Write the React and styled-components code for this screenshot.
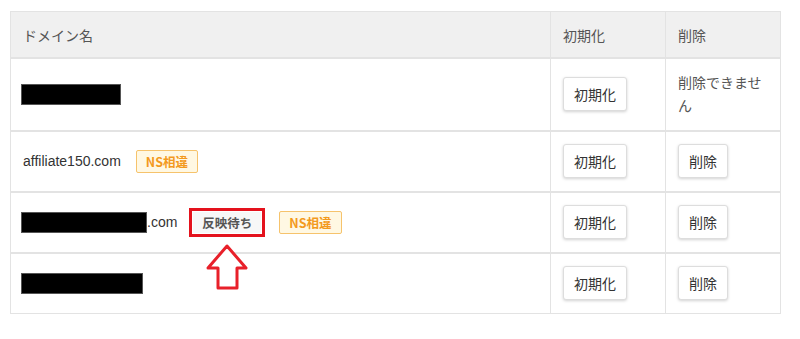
import styled, { createGlobalStyle, css } from 'styled-components';

const GlobalStyle = createGlobalStyle`
  body {
    margin: 0;
    background: #fff;
    font-family: "Noto Sans CJK JP", "Liberation Sans", sans-serif;
    color: #333;
  }
`;

const Page = styled.div`
  padding: 11px 0 0 10px;
`;

const Table = styled.table`
  width: 771px;
  border-collapse: collapse;
  table-layout: fixed;
  border: 1px solid #e3e3e3;
  font-size: 14px;
`;

const Head = styled.th`
  background: #f0f0f0;
  color: #555;
  font-weight: 400;
  text-align: left;
  padding: 12px 12px 11px;
  line-height: 22px;
  border: 1px solid #e3e3e3;
  border-bottom-width: 2px;
  width: ${({ $w }) => $w || 'auto'};
`;

const Cell = styled.td`
  padding: 12px 12px 13px;
  line-height: 23px;
  border: 1px solid #e3e3e3;
  border-top-width: 2px;
  vertical-align: middle;
  color: #555;
`;

const DomainLine = styled.div`
  display: flex;
  align-items: center;
  font-family: "Liberation Sans", Arial, sans-serif;
  color: #333;
`;

const Redacted = styled.span`
  display: inline-block;
  margin-left: -2px;
  width: ${({ $w }) => $w}px;
  height: 21px;
  background: #000;
  border: 1px solid #555;
  box-sizing: border-box;
`;

const BadgeWrap = styled.span`
  position: relative;
  margin-left: ${({ $gap }) => $gap || 16}px;
  display: inline-flex;
`;

const Badge = styled.span`
  display: inline-flex;
  align-items: center;
  height: 21px;
  padding: 0 9px;
  border-radius: 2px;
  font-family: "Noto Sans CJK JP", sans-serif;
  font-size: 12.5px;
  font-weight: 700;
  ${({ $tone }) =>
    $tone === 'warn'
      ? css`
          color: #f39a1e;
          background: #fff8e3;
          border: 1px solid #f6c36c;
        `
      : css`
          color: #555;
          background: #f7f7f7;
          border: 1px solid #ddd;
        `}
  ${({ $marked }) =>
    $marked &&
    css`
      border-radius: 0;
      outline: 3px solid #e4121d;
      outline-offset: 0;
      border-color: #fff;
    `}
`;

const Arrow = styled.svg`
  position: absolute;
  top: calc(100% + 10px);
  left: 50%;
  transform: translateX(-50%);
  overflow: visible;
`;

const Button = styled.button`
  height: 34px;
  padding: 0 10px;
  background: #fff;
  border: 1px solid #ddd;
  border-radius: 3px;
  box-shadow: 0 1px 3px rgba(0, 0, 0, 0.18);
  font-family: "Noto Sans CJK JP", sans-serif;
  font-size: 14px;
  color: #333;
  cursor: pointer;
`;

const UpArrow = () => (
  <Arrow width="42" height="46" viewBox="0 0 42 46">
    <polygon
      points="21,2 40,24 31,24 31,44 12,44 12,24 2,24"
      fill="#fff"
      stroke="#e8202a"
      strokeWidth="3"
      strokeLinejoin="round"
    />
  </Arrow>
);

const rows = [
  { id: 1, redact: 100, deletable: false },
  { id: 2, name: 'affiliate150.com', badges: [{ label: 'NS相違', tone: 'warn' }], deletable: true },
  {
    id: 3,
    redact: 126,
    suffix: '.com',
    badges: [
      { label: '反映待ち', tone: 'plain', marked: true },
      { label: 'NS相違', tone: 'warn' },
    ],
    deletable: true,
  },
  { id: 4, redact: 122, deletable: true },
];

export default function App() {
  return (
    <Page>
      <GlobalStyle />
      <Table>
        <thead>
          <tr>
            <Head>ドメイン名</Head>
            <Head $w="90px">初期化</Head>
            <Head $w="90px">削除</Head>
          </tr>
        </thead>
        <tbody>
          {rows.map((row) => (
            <tr key={row.id}>
              <Cell>
                <DomainLine>
                  {row.redact && <Redacted $w={row.redact} />}
                  {row.suffix}
                  {row.name}
                  {(row.badges || []).map((b, i) => (
                    <BadgeWrap key={b.label} $gap={i === 0 ? 15 : 17}>
                      <Badge $tone={b.tone} $marked={b.marked}>{b.label}</Badge>
                      {b.marked && <UpArrow />}
                    </BadgeWrap>
                  ))}
                </DomainLine>
              </Cell>
              <Cell>
                <Button>初期化</Button>
              </Cell>
              <Cell>{row.deletable ? <Button>削除</Button> : '削除できません'}</Cell>
            </tr>
          ))}
        </tbody>
      </Table>
    </Page>
  );
}
